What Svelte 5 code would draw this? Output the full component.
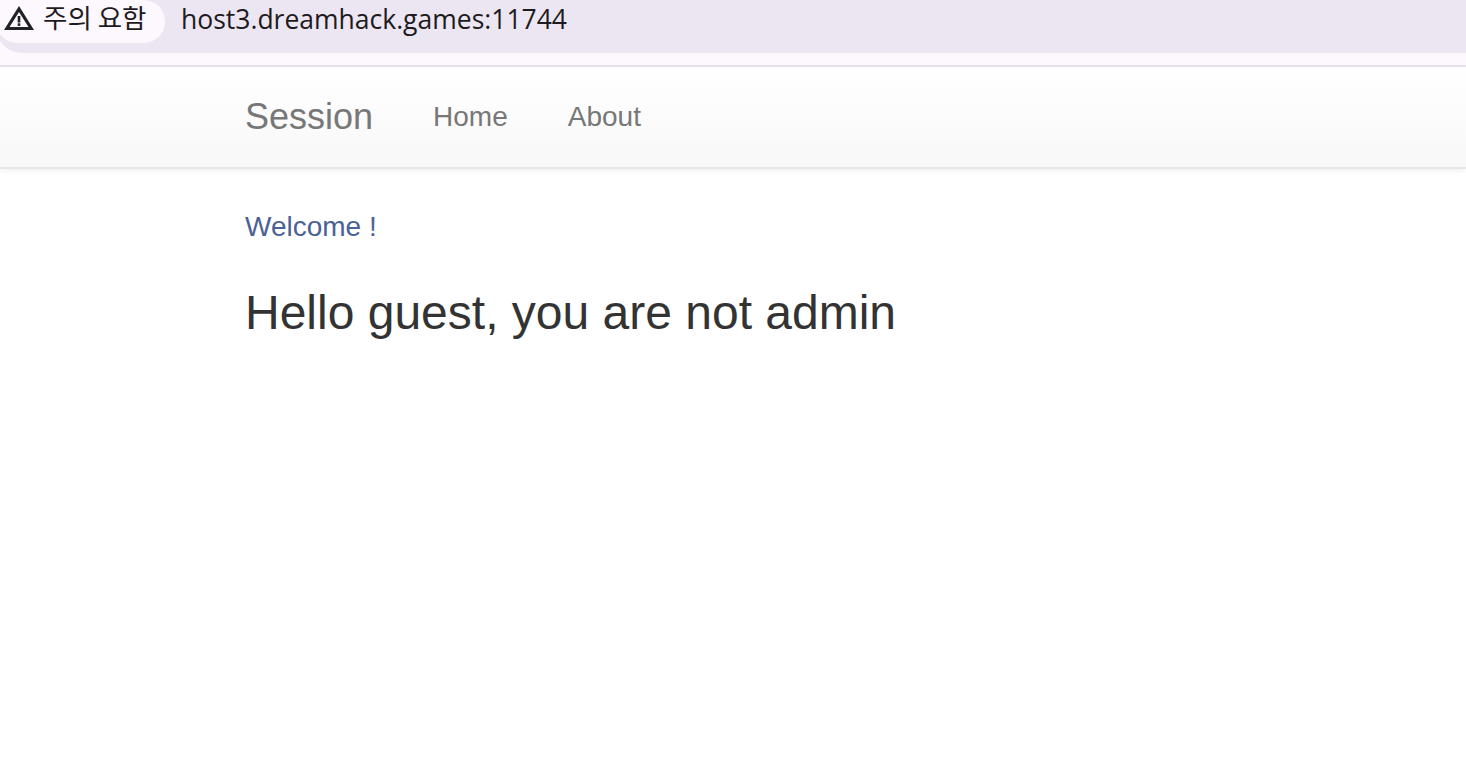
<script>
  const links = ["Home", "About"];
</script>

<div class="toolbar">
  <div class="omnibox">
    <div class="chip">
      <svg width="30" height="24" viewBox="0 0 30 24" aria-hidden="true">
        <path fill-rule="evenodd" d="M15 0 L30 24 H0 Z M15 6 L5.5 21 H24.5 Z" fill="#202124" />
        <rect x="13.7" y="10" width="2.6" height="6.5" fill="#202124" />
        <rect x="13.7" y="17.3" width="2.6" height="2.6" fill="#202124" />
      </svg>
      <span class="chip-label">주의 요함</span>
    </div>
    <span class="url">host3.dreamhack.games:11744</span>
  </div>
</div>

<nav class="navbar">
  <a class="brand" href="#top">Session</a>
  <ul>
    {#each links as link}
      <li><a href="#top">{link}</a></li>
    {/each}
  </ul>
</nav>

<main>
  <p class="welcome">Welcome !</p>
  <h3>Hello guest, you are not admin</h3>
</main>

<style>
  :global(body) {
    margin: 0;
    background: #fff;
    font-family: "Liberation Sans", Arial, sans-serif;
  }
  .toolbar {
    height: 65px;
    background: #fdf7fe;
    border-bottom: 2px solid #e9e2ee;
  }
  /* the pill runs off the left edge of the window, only its corner shows */
  .omnibox {
    height: 53px;
    margin-left: -4px;
    background: #ece6f2;
    border-bottom-left-radius: 26px;
    display: flex;
    align-items: flex-start;
  }
  .chip {
    width: 169px;
    height: 43px;
    box-sizing: border-box;
    padding: 2px 0 0 8px;
    background: #fdf7fe;
    border-radius: 0 22px 22px 22px;
    display: flex;
    align-items: flex-start;
    gap: 9px;
    flex-shrink: 0;
  }
  .chip svg {
    margin-top: 4px;
  }
  .chip-label {
    font-family: "Noto Sans CJK KR", sans-serif;
    font-size: 26.5px;
    line-height: 30px;
    color: #1d1b20;
  }
  .url {
    margin-left: 16px;
    margin-top: 2px;
    font-family: "Open Sans", sans-serif;
    font-size: 26.5px;
    line-height: 34px;
    color: #1d1b20;
  }
  .navbar {
    height: 100px;
    padding-left: 245px;
    display: flex;
    align-items: center;
    gap: 60px;
    background: linear-gradient(to bottom, #fff 0%, #f8f8f8 100%);
    border-bottom: 2px solid #e7e7e7;
    box-shadow: 0 2px 6px rgba(0, 0, 0, 0.06);
  }
  .brand {
    font-size: 36px;
    color: #777;
    text-decoration: none;
  }
  ul {
    display: flex;
    gap: 60px;
    list-style: none;
    margin: 0;
    padding: 0;
  }
  li a {
    font-size: 28px;
    color: #777;
    text-decoration: none;
  }
  main {
    padding: 41px 0 0 245px;
  }
  .welcome {
    margin: 0;
    font-size: 28px;
    line-height: 34px;
    color: #4b6196;
  }
  h3 {
    margin: 41px 0 0;
    font-size: 48px;
    font-weight: 400;
    line-height: 56px;
    color: #333;
  }
</style>
